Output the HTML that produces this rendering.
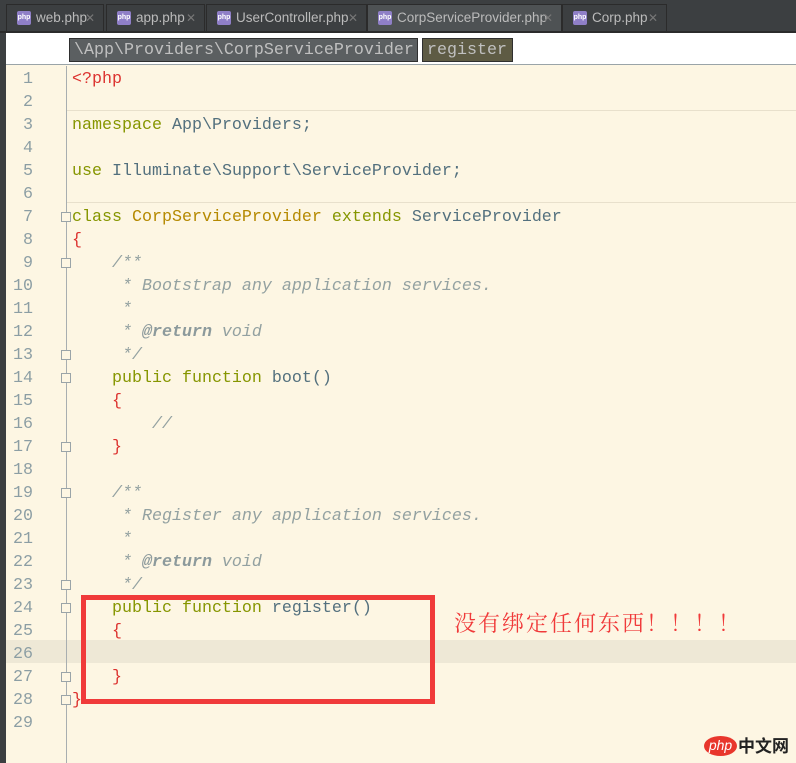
<!DOCTYPE html>
<html><head><meta charset="utf-8"><style>
*{margin:0;padding:0;box-sizing:border-box}
body{width:796px;height:763px;overflow:hidden;background:#fdf6e3;position:relative;font-family:"Liberation Sans",sans-serif}
.tabbar{position:absolute;left:0;top:0;width:796px;height:33px;background:#3c3f41;border-bottom:2px solid #2b2b2b}
.tab{position:absolute;top:4px;height:27px;background:#3c3f41;border:1px solid #2b2b2b;border-bottom:none;color:#bbbbbb;font-size:13.5px;line-height:26px;padding-left:29px}
.tab.act{background:#4e5254}
.tab .ic{position:absolute;left:10px;top:6px;width:14px;height:14px;background:#8f7fc7;border-radius:2px;font-size:7px;line-height:14px;color:#fff;text-align:center;font-weight:bold}
.tab .x{position:absolute;right:8px;top:0;color:#777;font-size:12px}
.hdr{position:absolute;left:6px;top:33px;width:790px;height:32px;background:#fff;border-bottom:1px solid #9aa4a8}
.bc{position:absolute;top:5px;height:24px;font-family:"Liberation Mono",monospace;font-size:16.67px;line-height:23px;color:#c0c0c0;padding:0 4px;border:1px solid #2f2f2f}
.leftstrip{position:absolute;left:0;top:33px;width:6px;height:730px;background:#3c3f41}
.gline{position:absolute;left:66px;top:66px;width:1px;height:697px;background:#a8aeb0}
.ln{position:absolute;left:6px;width:27px;text-align:right;font-family:"Liberation Mono",monospace;font-size:16.67px;color:#8c9ea4;height:23px;line-height:23px;margin-top:2px}
.code{position:absolute;left:72px;font-family:"Liberation Mono",monospace;font-size:16.67px;height:23px;line-height:23px;white-space:pre;color:#53707e;margin-top:2px}
.k{color:#869600}.r{color:#dc322f}.c{color:#93a1a1;font-style:italic}.y{color:#b58900}.cb{color:#8c9a9c;font-weight:bold;font-style:italic}
.sep{position:absolute;left:67px;width:729px;height:1px;background:#e8e0cc}
.fold{position:absolute;left:61px;width:10px;height:10px;border:1px solid #9aa4a8;background:#fdf6e3}
</style></head><body>
<div class="tabbar">
<div class="tab" style="left:6px;width:98px"><span class="ic">php</span>web.php<span class="x">✕</span></div>
<div class="tab" style="left:106px;width:99px"><span class="ic">php</span>app.php<span class="x">✕</span></div>
<div class="tab" style="left:206px;width:161px"><span class="ic">php</span>UserController.php<span class="x">✕</span></div>
<div class="tab act" style="left:367px;width:195px"><span class="ic">php</span>CorpServiceProvider.php<span class="x">✕</span></div>
<div class="tab" style="left:562px;width:105px"><span class="ic">php</span>Corp.php<span class="x">✕</span></div>
</div>
<div class="leftstrip"></div>
<div class="hdr">
<div class="bc" style="left:63px;width:349px;background:#5b5f61">\App\Providers\CorpServiceProvider</div>
<div class="bc" style="left:416px;width:91px;background:#5e5b44">register</div>
</div>
<div style="position:absolute;left:6px;top:640px;width:790px;height:23px;background:#eee8d6"></div>
<div class="sep" style="top:110px"></div>
<div class="sep" style="top:202px"></div>
<div class="gline"></div>

<div class="ln" style="top:66px">1</div><div class="ln" style="top:89px">2</div><div class="ln" style="top:112px">3</div><div class="ln" style="top:135px">4</div><div class="ln" style="top:158px">5</div><div class="ln" style="top:181px">6</div><div class="ln" style="top:204px">7</div><div class="ln" style="top:227px">8</div><div class="ln" style="top:250px">9</div><div class="ln" style="top:273px">10</div><div class="ln" style="top:296px">11</div><div class="ln" style="top:319px">12</div><div class="ln" style="top:342px">13</div><div class="ln" style="top:365px">14</div><div class="ln" style="top:388px">15</div><div class="ln" style="top:411px">16</div><div class="ln" style="top:434px">17</div><div class="ln" style="top:457px">18</div><div class="ln" style="top:480px">19</div><div class="ln" style="top:503px">20</div><div class="ln" style="top:526px">21</div><div class="ln" style="top:549px">22</div><div class="ln" style="top:572px">23</div><div class="ln" style="top:595px">24</div><div class="ln" style="top:618px">25</div><div class="ln" style="top:641px">26</div><div class="ln" style="top:664px">27</div><div class="ln" style="top:687px">28</div><div class="ln" style="top:710px">29</div>

<div class="fold" style="top:212px"></div><div class="fold" style="top:258px"></div><div class="fold" style="top:350px"></div><div class="fold" style="top:373px"></div><div class="fold" style="top:442px"></div><div class="fold" style="top:488px"></div><div class="fold" style="top:580px"></div><div class="fold" style="top:603px"></div><div class="fold" style="top:672px"></div><div class="fold" style="top:695px"></div>

<div class="code r" style="top:66px">&lt;?php</div>
<div class="code" style="top:112px"><span class="k">namespace</span> App\Providers;</div>
<div class="code" style="top:158px"><span class="k">use</span> Illuminate\Support\ServiceProvider;</div>
<div class="code" style="top:204px"><span class="k">class</span> <span class="y">CorpServiceProvider</span> <span class="k">extends</span> ServiceProvider</div>
<div class="code r" style="top:227px">{</div>
<div class="code c" style="top:250px">    /**</div>
<div class="code c" style="top:273px">     * Bootstrap any application services.</div>
<div class="code c" style="top:296px">     *</div>
<div class="code c" style="top:319px">     * <span class="cb">@return</span> void</div>
<div class="code c" style="top:342px">     */</div>
<div class="code" style="top:365px">    <span class="k">public function</span> boot()</div>
<div class="code r" style="top:388px">    {</div>
<div class="code c" style="top:411px">        //</div>
<div class="code r" style="top:434px">    }</div>
<div class="code c" style="top:480px">    /**</div>
<div class="code c" style="top:503px">     * Register any application services.</div>
<div class="code c" style="top:526px">     *</div>
<div class="code c" style="top:549px">     * <span class="cb">@return</span> void</div>
<div class="code c" style="top:572px">     */</div>
<div class="code" style="top:595px">    <span class="k">public function</span> register()</div>
<div class="code r" style="top:618px">    {</div>
<div class="code r" style="top:664px">    }</div>
<div class="code r" style="top:687px">}</div>

<div style="position:absolute;left:81px;top:595px;width:354px;height:109px;border:5px solid #f03a3a"></div>
<div style="position:absolute;left:454px;top:608px;font-family:'Noto Serif CJK SC',serif;font-size:22px;letter-spacing:2px;color:#f03a3a;white-space:nowrap;line-height:30px">没有绑定任何东西！！！！</div>

<div style="position:absolute;left:704px;top:736px;width:33px;height:20px;background:#e8362c;border-radius:50%;color:#fff;font-size:14px;line-height:19px;text-align:center;font-style:italic">php</div>
<div style="position:absolute;left:738px;top:733px;font-family:'Noto Sans CJK SC',sans-serif;font-size:17px;color:#222;font-weight:bold;line-height:24px">中文网</div>
</body></html>
